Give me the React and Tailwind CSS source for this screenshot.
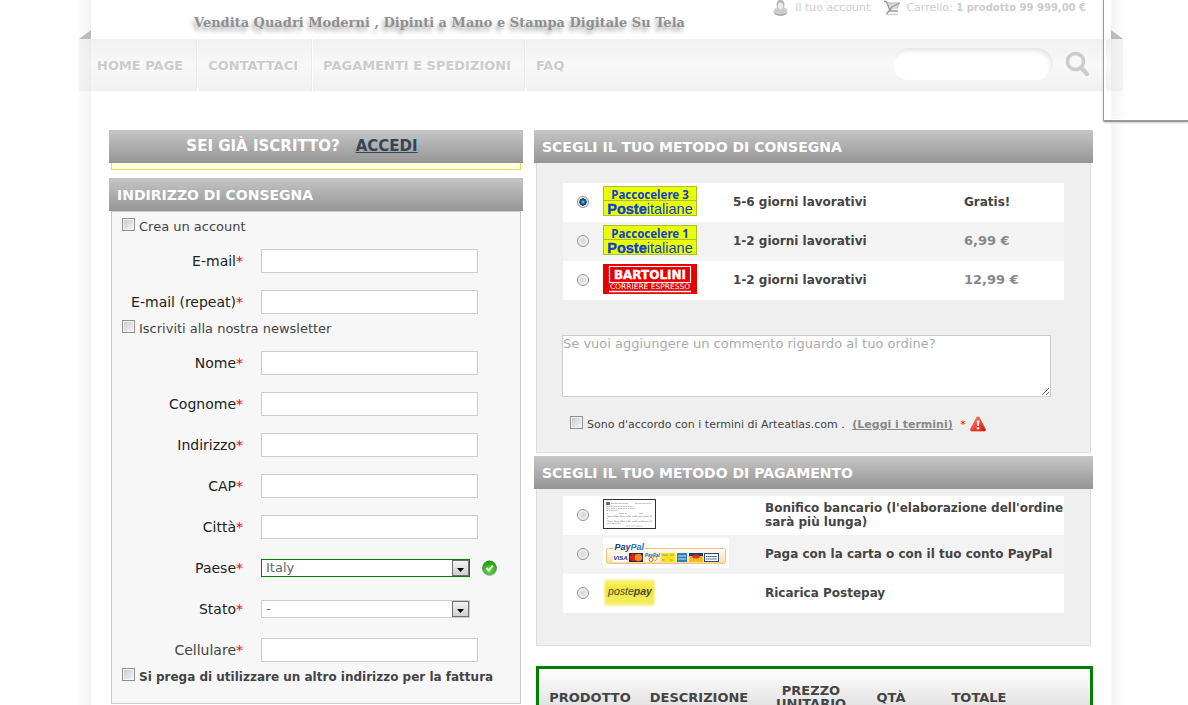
import React from "react";

const navItems = ["Home page", "Contattaci", "Pagamenti e spedizioni", "FAQ"];

const checkboxClass =
  "size-[13px] shrink-0 appearance-none border border-[#8e8f8f] bg-[linear-gradient(135deg,#c2c6cd,#f8f8f8)] shadow-[inset_0_0_0_1px_#f4f4f4] checked:bg-[#31618f]";
const radioClass =
  "size-3 shrink-0 appearance-none justify-self-center rounded-full border border-[#8e8f8f] bg-[radial-gradient(circle,#d4d6d9_0,#e2e4e6_45%,#f8f8f8_70%)] checked:bg-[radial-gradient(circle,#7fd0f5_0,#1a6fa8_25%,#0c2f50_48%,#f4f4f4_56%)]";

function PanelTitle({ children, className = "px-2 text-sm" }) {
  return (
    <h2
      className={`flex h-[33px] items-center bg-linear-to-b from-[#c6c6c6] to-[#959595] font-bold text-white uppercase ${className}`}
    >
      {children}
    </h2>
  );
}

function CheckRow({ id, children, bold }) {
  return (
    <div className="flex h-5 gap-1 px-2.5 pt-0.5">
      <input id={id} type="checkbox" className={checkboxClass} />
      <label htmlFor={id} className={`leading-[18px] ${bold ? "text-xs leading-[18px] font-bold" : "text-[13px]"}`}>
        {children}
      </label>
    </div>
  );
}

function Field({ id, label, soft, children }) {
  return (
    <div className="grid h-6 grid-cols-[131px_1fr] items-center gap-[18px]">
      <label htmlFor={id} className={`text-right text-sm ${soft ? "text-[#444]" : "text-[#222]"}`}>
        {label}
        <span className="text-[#f00]">*</span>
      </label>
      <div className="flex items-center gap-3">
        {children || (
          <input id={id} type="text" className="h-6 w-[217px] border border-[#ccc] bg-white px-1 text-[13px]" />
        )}
      </div>
    </div>
  );
}

function Dropdown({ id, value, valid }) {
  return (
    <div className={`relative h-[18px] w-[209px] border bg-white ${valid ? "border-[#008000]" : "border-[#ccc]"}`}>
      <select id={id} className="block h-4 w-full appearance-none pl-1 text-[13px] leading-4 text-[#666]">
        <option>{value}</option>
      </select>
      <span className="pointer-events-none absolute top-0 right-0 flex h-4 w-[17px] items-center justify-center border border-[#707070] bg-linear-to-b from-[#f4f4f4] to-[#cfcfcf]">
        <svg width="7" height="4" viewBox="0 0 7 4" className="mt-1" aria-hidden="true">
          <path d="M0 0h7L3.500 4z" fill="#000" />
        </svg>
      </span>
    </div>
  );
}

function ValidIcon() {
  return (
    <svg width="16" height="16" viewBox="0 0 16 16" aria-hidden="true">
      <defs>
        <radialGradient id="okFill" cx=".5" cy=".75" r=".7">
          <stop offset="0" stopColor="#5be03a" />
          <stop offset="1" stopColor="#1d9a14" />
        </radialGradient>
      </defs>
      <circle cx="7.500" cy="8.200" r="7.500" fill="#8d9a90" />
      <circle cx="7.500" cy="7.600" r="7" fill="url(#okFill)" />
      <path d="M4.300 8l2.300 2.400 4.200-4.800" fill="none" stroke="#fff" strokeWidth="2" />
    </svg>
  );
}

function WarningIcon() {
  return (
    <svg width="16" height="16" viewBox="0 0 16 16" className="shrink-0" aria-hidden="true">
      <defs>
        <linearGradient id="warnFill" x1="0" y1="0" x2="1" y2="1">
          <stop offset="0" stopColor="#ff9a80" />
          <stop offset=".6" stopColor="#f0392b" />
          <stop offset="1" stopColor="#d81010" />
        </linearGradient>
      </defs>
      <path d="M8 .8c.6 0 1 .4 1.300.9l6.200 11.500c.4 1-.1 1.900-1.200 1.900H1.700c-1.100 0-1.600-.9-1.200-1.900L6.700 1.700C7 1.200 7.400.8 8 .8z" fill="url(#warnFill)" stroke="#c8352b" strokeWidth=".6" />
      <path d="M6.800 4.500h2.600L8.900 10H7.300z" fill="#fff" />
      <circle cx="8.100" cy="12.200" r="1.300" fill="#fff" />
    </svg>
  );
}

function PosteLogo({ level }) {
  return (
    <svg width="94" height="30" viewBox="0 0 94 30" role="img" aria-label={`Paccocelere ${level}`}>
      <rect x=".5" y=".5" width="93" height="29" fill="#eaff00" stroke="#a9bf3a" />
      <path d="M1 14.500h92" stroke="#a9bf3a" />
      <g fill="#1040d0" textAnchor="middle">
        <text x="47" y="12.500" fontFamily="Noto Sans, sans-serif" fontSize="11.500" fontWeight="700">
          Paccocelere {level}
        </text>
        <text x="47" y="27.500" fontFamily="Liberation Sans, sans-serif" fontSize="14.500" fontWeight="400">
          <tspan fontWeight="700" stroke="#1040d0" strokeWidth=".4">Poste</tspan>italiane
        </text>
      </g>
    </svg>
  );
}

function BartoliniLogo() {
  return (
    <svg width="94" height="30" viewBox="0 0 94 30" role="img" aria-label="Bartolini">
      <rect width="94" height="30" fill="#e60000" />
      <path d="M6.500 18.500v-16h81v16z" fill="none" stroke="#fff" strokeWidth="1.200" />
      <path d="M6 27.500h82" stroke="#fff" strokeWidth="1.400" />
      <g fill="#fff" textAnchor="middle" fontFamily="DejaVu Sans, sans-serif">
        <text x="47" y="15" fontSize="12" fontWeight="700" stroke="#fff" strokeWidth=".4">BARTOLINI</text>
        <text x="47" y="25" fontSize="7.500" fontWeight="400">CORRIERE ESPRESSO</text>
      </g>
    </svg>
  );
}

function BankSlip() {
  return (
    <svg width="53" height="30" viewBox="0 0 53 30" role="img" aria-label="Bonifico">
      <rect x=".5" y=".5" width="52" height="29" fill="#fff" stroke="#333" />
      <rect x="3" y="3" width="4" height="3" fill="#6a62b0" />
      <g fill="none" stroke="#b4b4bc" strokeWidth=".8">
        <path d="M8 4.500h17M32 4.500h16" strokeDasharray="3 .6" />
        <path d="M3 7.500h27M3 9.500h28M3 11.500h12" strokeDasharray="2 .4" />
        <path d="M4 14.500h1M16 14.500h8M36 14.500h4M5 17.500h43M4 19.500h1M5 22.500h43" strokeDasharray="5 1" />
        <path d="M4 24.500h14M23 27h16" strokeDasharray="2 .5" />
        <path d="M5 16v2M12 16v2M18 16v2M26 16v2M33 16v2M48 16v2M5 21v2M12 21v2M19 21v2M26 21v2M33 21v2M40 21v2M48 21v2" />
      </g>
    </svg>
  );
}

function PayPalLogo() {
  return (
    <svg width="126" height="30" viewBox="0 0 126 30" role="img" aria-label="PayPal">
      <defs>
        <linearGradient id="ppBand" x1="0" y1="0" x2="0" y2="1">
          <stop offset="0" stopColor="#fff" />
          <stop offset="1" stopColor="#ffd9a0" />
        </linearGradient>
      </defs>
      <rect width="126" height="30" fill="#fff" />
      <rect x="3.500" y="10.500" width="119" height="15" rx="2" fill="url(#ppBand)" stroke="#f5c079" />
      <rect x="10" y="3" width="31" height="9" fill="#fff" />
      <text x="11.500" y="11.500" fontFamily="Liberation Sans, sans-serif" fontSize="9" fontWeight="700" fontStyle="italic" fill="#1d3b6f">
        Pay<tspan fill="#2a78b5">Pal</tspan>
      </text>
      <rect x="10" y="15" width="14" height="9" fill="#fff" />
      <text x="10.500" y="22" fontFamily="Liberation Sans, sans-serif" fontSize="6" fontWeight="700" fontStyle="italic" fill="#1a2f8f">VISA</text>
      <rect x="26" y="15" width="14" height="9" fill="#1c2a5c" />
      <circle cx="30.500" cy="19.500" r="3.800" fill="#d8201c" />
      <circle cx="35.500" cy="19.500" r="3.800" fill="#f08a1c" />
      <rect x="42" y="15" width="14" height="9" fill="#f8f4ee" />
      <text x="42" y="19" fontFamily="Liberation Sans, sans-serif" fontSize="4.500" fontWeight="700" fontStyle="italic" fill="#2a5a98">PayPal</text>
      <circle cx="48" cy="21.500" r="2" fill="none" stroke="#e06a2a" />
      <circle cx="52" cy="20.500" r="2" fill="none" stroke="#e8a020" />
      <rect x="58" y="15" width="14" height="9" fill="#ffe21c" />
      <path d="M59 17h6M67 17h4M59 22h3M67 22h3" stroke="#8fa05a" />
      <rect x="74" y="15" width="10" height="9" fill="#2f7fc0" />
      <path d="M75 18h8M75 21h8" stroke="#c5e2f5" strokeWidth="1.200" />
      <rect x="86" y="15" width="14" height="9" fill="#f4bd20" />
      <path d="M86 15h14v3H86z" fill="#1f3674" />
      <ellipse cx="93" cy="18.500" rx="4" ry="2" fill="#d63a20" />
      <rect x="101.500" y="15.500" width="14" height="8" fill="#fff" stroke="#26467f" />
      <path d="M103 18.500h11M103 21h11" stroke="#26467f" strokeDasharray="1.500 .6" />
    </svg>
  );
}

function PostepayLogo() {
  return (
    <svg width="53" height="30" viewBox="0 0 53 30" role="img" aria-label="Postepay">
      <defs>
        <filter id="ppSoft" x="-10%" y="-10%" width="120%" height="120%">
          <feGaussianBlur stdDeviation="1.200" />
        </filter>
        <linearGradient id="ppYellow" x1="0" y1="0" x2="0" y2="1">
          <stop offset="0" stopColor="#f8f27c" />
          <stop offset=".4" stopColor="#efe62c" />
          <stop offset="1" stopColor="#f4ef70" />
        </linearGradient>
      </defs>
      <rect x="1.500" y="2.500" width="50" height="26" fill="url(#ppYellow)" filter="url(#ppSoft)" />
      <text x="27" y="18" textAnchor="middle" fontFamily="Liberation Sans, sans-serif" fontSize="10.500" fontWeight="400" fontStyle="italic" fill="#4a4550">
        poste<tspan fontWeight="700">pay</tspan>
      </text>
    </svg>
  );
}

const shipping = [
  { id: "ship-p3", logo: <PosteLogo level="3" />, time: "5-6 giorni lavorativi", price: "Gratis!" },
  { id: "ship-p1", logo: <PosteLogo level="1" />, time: "1-2 giorni lavorativi", price: "6,99 €" },
  { id: "ship-br", logo: <BartoliniLogo />, time: "1-2 giorni lavorativi", price: "12,99 €" },
];

const payments = [
  { id: "pay-bank", logo: <BankSlip />, text: "Bonifico bancario (l'elaborazione dell'ordine sarà più lunga)" },
  { id: "pay-pp", logo: <PayPalLogo />, text: "Paga con la carta o con il tuo conto PayPal" },
  { id: "pay-post", logo: <PostepayLogo />, text: "Ricarica Postepay" },
];

function Header() {
  return (
    <header className="flex h-[39px] items-start justify-between pr-[25px] pl-[103px]">
      <p className="pt-[15px] font-['DejaVu_Serif',serif] text-[13px] leading-4 font-bold whitespace-nowrap text-[#8f8f8f] [text-shadow:-2px_4px_4px_#aaa]">
        Vendita Quadri Moderni , Dipinti a Mano e Stampa Digitale Su Tela
      </p>
      <div className="flex text-[11px] leading-4 whitespace-nowrap text-[#ccc]">
        <a href="#account" className="flex gap-[7px]">
          <svg width="15" height="16" viewBox="0 0 15 16" aria-hidden="true">
            <path d="M.5 12c0-3 2-4.300 4-4.800h6c2 .5 4 1.800 4 4.800 0 5-14 5-14 0z" fill="#ccc" />
            <path d="M1 13c1 3.500 12 3.500 13 0-3 1.500-10 1.500-13 0z" fill="#aaa" />
            <ellipse cx="7.500" cy="4.500" rx="4" ry="4.800" fill="#b8b8b8" />
            <ellipse cx="7.500" cy="6" rx="2.600" ry="3.200" fill="#eee" />
          </svg>
          Il tuo account
        </a>
        <a href="#carrello" className="ml-3.5 flex gap-1.5">
          <svg width="16" height="16" viewBox="0 0 16 16" fill="none" aria-hidden="true">
            <path d="M3 2.500l12.500.5-2.500 6-8 1z" fill="#ddd" />
            <path d="M0 1.500h2.500l3.500 9" stroke="#999" strokeWidth="1.300" />
            <path d="M3 3h12.500l-2.500 5.500" stroke="#bbb" />
            <path d="M15.500 3L8 7l-6 7.500M5 11h9" stroke="#999" strokeWidth="1.300" />
            <path d="M2 14.500h12" stroke="#ccc" strokeWidth="1.400" />
          </svg>
          <span>
            Carrello: <b className="text-[10px]">1 prodotto 99 999,00 €</b>
          </span>
        </a>
      </div>
    </header>
  );
}

function Nav() {
  return (
    <nav className="relative mx-[-12px] flex h-[52px] items-center bg-[linear-gradient(#f1f1f1,#f8f8f8_50%,#f1f1f1)]">
      <svg width="12" height="9" viewBox="0 0 12 9" className="absolute bottom-full left-0" aria-hidden="true">
        <path d="M12 0v9H0z" fill="#bbb" />
      </svg>
      <svg width="12" height="9" viewBox="0 0 12 9" className="absolute right-0 bottom-full" aria-hidden="true">
        <path d="M0 0v9h12z" fill="#bbb" />
      </svg>
      <span className="h-full w-3 bg-linear-to-r from-[#f3f3f3] to-[#e9e9e9] opacity-70" />
      <ul className="flex h-full flex-1 pl-1.5">
        {navItems.map((item, i) => (
          <li
            key={item}
            className={`flex items-center pt-px pr-[13px] text-[13px] font-bold whitespace-nowrap uppercase ${i === 0 ? "" : "border-l border-[#eaeaea] pl-[11px] shadow-[inset_1px_0_0_#fff]"}`}
          >
            <a href="#nav" className="text-[#ccc] [text-shadow:1px_1px_0_#fff]">
              {item}
            </a>
          </li>
        ))}
      </ul>
      <form className="flex items-center gap-3 pr-[21px] pb-0.5">
        <input
          type="search"
          aria-label="Cerca"
          className="h-8 w-[160px] appearance-none rounded-full bg-white px-4 shadow-[inset_-2px_3px_4px_#e6e6e6]"
        />
        <button type="button" aria-label="Cerca" className="text-[#ccc]">
          <svg width="25" height="26" viewBox="0 0 25 26" fill="none" stroke="currentColor" aria-hidden="true">
            <circle cx="10.500" cy="10.500" r="8" strokeWidth="3.600" />
            <path d="M16.500 17l5.500 6" strokeWidth="4.200" strokeLinecap="round" />
          </svg>
        </button>
      </form>
      <span className="h-full w-3 bg-linear-to-l from-[#f3f3f3] to-[#e9e9e9] opacity-70" />
    </nav>
  );
}

function OptionRow({ children, shaded }) {
  return <li className={shaded ? "bg-[#f3f3f3]" : "bg-white"}>{children}</li>;
}

export default function App() {
  return (
    <div className="relative flex min-h-screen justify-center overflow-x-hidden bg-white pl-3.5 font-['DejaVu_Sans',sans-serif] text-[#444]">
      <div className="w-4 shrink-0 bg-linear-to-r from-white to-[#f4f4f4]" />
      <div className="w-full max-w-[1020px]">
        <Header />
        <Nav />
        <main className="grid grid-cols-[414fr_559fr] items-start gap-[11px] px-[18px] pt-[39px]">
          <section>
            <PanelTitle className="justify-center gap-4 pr-7 text-[15px]">
              <span>Sei già iscritto?</span>
              <a href="#accedi" className="text-[#344556] underline">
                Accedi
              </a>
            </PanelTitle>
            <div className="mx-0.5 mb-2 h-[7px] border border-t-0 border-[#e6db55] bg-[#ffffe0]" />
            <PanelTitle>Indirizzo di consegna</PanelTitle>
            <form className="mx-0.5 border border-[#ccc] bg-[#f7f7f7] pt-1 pb-[17px]">
              <CheckRow id="create">Crea un account</CheckRow>
              <div className="mt-[13px] mb-1 flex flex-col gap-[17px]">
                <Field id="email" label="E-mail" />
                <Field id="email2" label="E-mail (repeat)" />
              </div>
              <CheckRow id="news">Iscriviti alla nostra newsletter</CheckRow>
              <div className="mt-[13px] mb-1 flex flex-col gap-[17px]">
                <Field id="nome" label="Nome" />
                <Field id="cognome" label="Cognome" />
                <Field id="indirizzo" label="Indirizzo" />
                <Field id="cap" label="CAP" />
                <Field id="citta" label="Città" />
                <Field id="paese" label="Paese">
                  <Dropdown id="paese" value="Italy" valid />
                  <ValidIcon />
                </Field>
                <Field id="stato" label="Stato">
                  <Dropdown id="stato" value="-" />
                </Field>
                <Field id="cell" label="Cellulare" soft />
              </div>
              <CheckRow id="other" bold>
                Si prega di utilizzare un altro indirizzo per la fattura
              </CheckRow>
            </form>
          </section>

          <section>
            <PanelTitle>Scegli il tuo metodo di consegna</PanelTitle>
            <div className="mx-0.5 mb-[3px] border border-t-0 border-[#ddd] bg-[#efefef] px-[26px] pt-5 pb-4">
              <ul>
                {shipping.map((s, i) => (
                  <OptionRow key={s.id} shaded={i % 2 === 1}>
                    <label
                      htmlFor={s.id}
                      className="grid h-[39px] grid-cols-[40px_130px_231px_1fr] items-center pb-px text-xs font-bold"
                    >
                      <input id={s.id} type="radio" name="ship" defaultChecked={i === 0} className={radioClass} />
                      <span className="flex pb-0.5">{s.logo}</span>
                      <span>{s.time}</span>
                      <span className={i === 0 ? "" : "text-[13px] text-[#888]"}>{s.price}</span>
                    </label>
                  </OptionRow>
                ))}
              </ul>
              <div className="mt-[35px] mr-[13px] ml-[-1px]">
                <textarea
                  aria-label="Commento"
                  placeholder="Se vuoi aggiungere un commento riguardo al tuo ordine?"
                  className="block h-[62px] w-full resize border border-[#ccc] bg-white text-[13px] leading-4 placeholder:text-[#aaa]"
                />
              </div>
              <div className="mt-[17px] flex h-[22px] gap-1 pt-0.5 pl-[7px] text-[11px] leading-[18px]">
                <input id="terms" type="checkbox" className={checkboxClass} />
                <label htmlFor="terms" className="whitespace-nowrap">
                  Sono d'accordo con i termini di Arteatlas.com .{" "}
                  <a href="#termini" className="mx-1 font-bold text-[#888] underline">
                    (Leggi i termini)
                  </a>{" "}
                  <span className="text-[#f00]">*</span>
                </label>
                <WarningIcon />
              </div>
            </div>

            <PanelTitle>Scegli il tuo metodo di pagamento</PanelTitle>
            <div className="mx-0.5 border border-t-0 border-[#ddd] bg-[#efefef] px-[26px] pt-[7px] pb-8">
              <ul>
                {payments.map((p, i) => (
                  <OptionRow key={p.id} shaded={i % 2 === 1}>
                    <label
                      htmlFor={p.id}
                      className="grid h-[39px] grid-cols-[40px_162px_1fr] items-center pb-px text-xs leading-[14px] font-bold"
                    >
                      <input id={p.id} type="radio" name="pay" className={radioClass} />
                      <span className="flex pb-0.5">{p.logo}</span>
                      <span>{p.text}</span>
                    </label>
                  </OptionRow>
                ))}
              </ul>
            </div>

            <div className="mt-5 ml-0.5 border-[3px] border-[#008000] bg-linear-to-b from-white to-[#d4d4d4]">
              <table className="w-full table-fixed text-[13px] leading-[13px]">
                <thead>
                  <tr className="h-14 uppercase">
                    <th className="w-[102px]">Prodotto</th>
                    <th className="w-[116px]">Descrizione</th>
                    <th className="w-[108px]">Prezzo unitario</th>
                    <th className="w-[52px]">Qtà</th>
                    <th className="w-[124px]">Totale</th>
                    <th />
                  </tr>
                </thead>
              </table>
            </div>
          </section>
        </main>
      </div>
      <div className="w-4 shrink-0 bg-linear-to-l from-white to-[#f4f4f4]" />
      <div className="absolute top-0 right-0 h-[122px] w-[85px] rounded-bl-xs border-b-2 border-l border-[#999] shadow-[inset_2px_-1px_0_#fff,0_1px_2px_#ccc]" />
    </div>
  );
}
